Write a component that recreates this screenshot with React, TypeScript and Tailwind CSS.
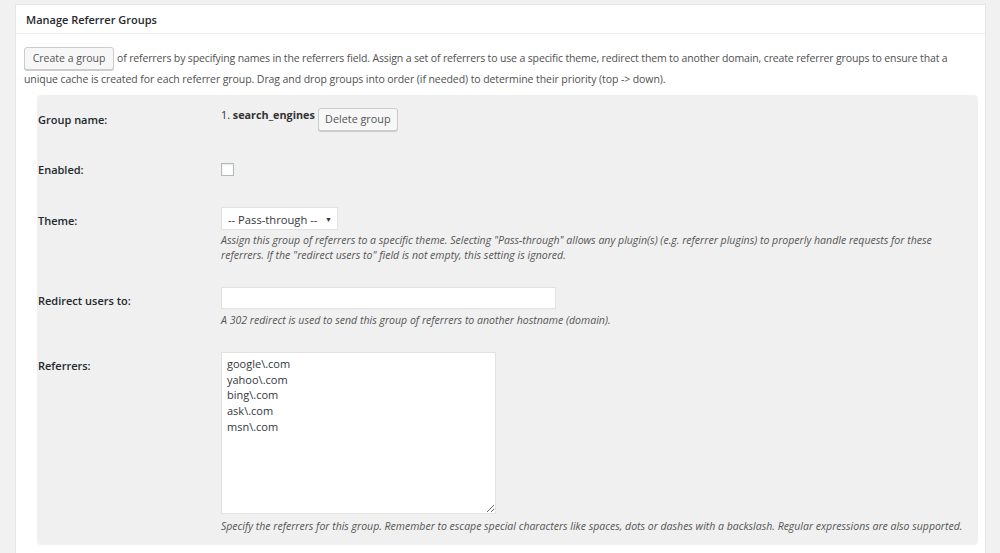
import React from "react";

const font = { fontFamily: '"Open Sans", "Noto Sans", sans-serif' };

function Label({ children, pt }: { children: React.ReactNode; pt: string }) {
  return (
    <div className={`w-[184px] shrink-0 text-[11px] leading-[16px] font-semibold text-[#23282d] pl-[1px] ${pt}`}>
      {children}
    </div>
  );
}

export default function App() {
  return (
    <div className="min-h-[553px] bg-[#f1f1f1] pt-[4px] pl-[15px] pr-[14px] overflow-hidden" style={font}>
      <div className="bg-white border border-[#e5e5e5] min-h-[560px]">
        <div className="h-[29px] px-[10px] pt-[3px] flex items-center border-b border-[#eeeeee]">
          <span className="text-[11px] font-semibold text-[#23282d]">Manage Referrer Groups</span>
        </div>
        <div className="pl-[8px] pr-[7px] pt-[13px]">
          <div className="text-[10.5px] text-[#505050] tracking-[-0.14px]">
            <div className="flex items-center h-[23px]">
              <span className="inline-flex items-center justify-center h-[23px] w-[90px] border border-[#cccccc] rounded-[3px] bg-[#f7f7f7] text-[#555] shadow-[0_1px_0_#ccc] tracking-normal">
                Create a group
              </span>
              <span className="ml-[3px]">
                of referrers by specifying names in the referrers field. Assign a set of referrers to use a specific theme, redirect them to another domain, create referrer groups to ensure that a
              </span>
            </div>
            <div className="leading-[20px] mt-[-1px] tracking-[-0.08px]">
              unique cache is created for each referrer group. Drag and drop groups into order (if needed) to determine their priority (top -&gt; down).
            </div>
          </div>

          <div className="ml-[13px] mt-[6px] bg-[#f0f0f0] rounded-[4px] shadow-[0_1px_1px_rgba(0,0,0,0.06)] pb-[10px]">
            {/* Group name */}
            <div className="flex h-[54px]">
              <Label pt="pt-[17px]">Group name:</Label>
              <div className="pt-[13px] flex items-start">
                <span className="text-[10.8px] leading-[14px] text-[#333]">
                  1. <span className="font-bold">search_engines</span>
                </span>
                <span className="ml-[3px] inline-flex items-center justify-center h-[23px] w-[80px] border border-[#cccccc] rounded-[3px] bg-[#f7f7f7] text-[10.8px] text-[#555] shadow-[0_1px_0_#ccc]">
                  Delete group
                </span>
              </div>
            </div>
            {/* Enabled */}
            <div className="flex h-[50px]">
              <Label pt="pt-[13px]">Enabled:</Label>
              <div className="pt-[14px]">
                <div className="w-[13px] h-[13px] bg-white border border-[#b4b9be] shadow-[inset_0_1px_2px_rgba(0,0,0,0.1)]" />
              </div>
            </div>
            {/* Theme */}
            <div className="flex h-[80px]">
              <Label pt="pt-[14px]">Theme:</Label>
              <div className="pt-[8px]">
                <div className="flex items-center h-[23px] w-[117px] bg-white border border-[#e2e2e2] pl-[6px] pr-[5px] pt-[3px] text-[11.2px] text-[#32373c]">
                  <span>-- Pass-through --</span>
                  <span className="ml-auto text-[7px]">▼</span>
                </div>
                <div className="mt-[3px] text-[10.55px] leading-[15px] italic text-[#555]">
                  Assign this group of referrers to a specific theme. Selecting "Pass-through" allows any plugin(s) (e.g. referrer plugins) to properly handle requests for these
                  <br />
                  referrers. If the "redirect users to" field is not empty, this setting is ignored.
                </div>
              </div>
            </div>
            {/* Redirect */}
            <div className="flex h-[65px]">
              <Label pt="pt-[14px]">Redirect users to:</Label>
              <div className="pt-[8px]">
                <div className="h-[22px] w-[335px] bg-white border border-[#e2e2e2]" />
                <div className="mt-[4px] text-[10.55px] leading-[15px] italic text-[#555]">
                  A 302 redirect is used to send this group of referrers to another hostname (domain).
                </div>
              </div>
            </div>
            {/* Referrers */}
            <div className="flex">
              <Label pt="pt-[14px]">Referrers:</Label>
              <div className="pt-[8px]">
                <textarea
                  readOnly
                  className="block w-[275px] h-[162px] bg-white border border-[#e2e2e2] px-[5px] pt-[3px] text-[11px] leading-[15.7px] text-[#32373c] outline-none resize"
                  style={font}
                  defaultValue={"google\\.com\nyahoo\\.com\nbing\\.com\nask\\.com\nmsn\\.com"}
                />
                <div className="mt-[5px] text-[10.5px] leading-[15px] italic text-[#555] whitespace-nowrap">
                  Specify the referrers for this group. Remember to escape special characters like spaces, dots or dashes with a backslash. Regular expressions are also supported.
                </div>
              </div>
            </div>
          </div>
        </div>
      </div>
    </div>
  );
}
